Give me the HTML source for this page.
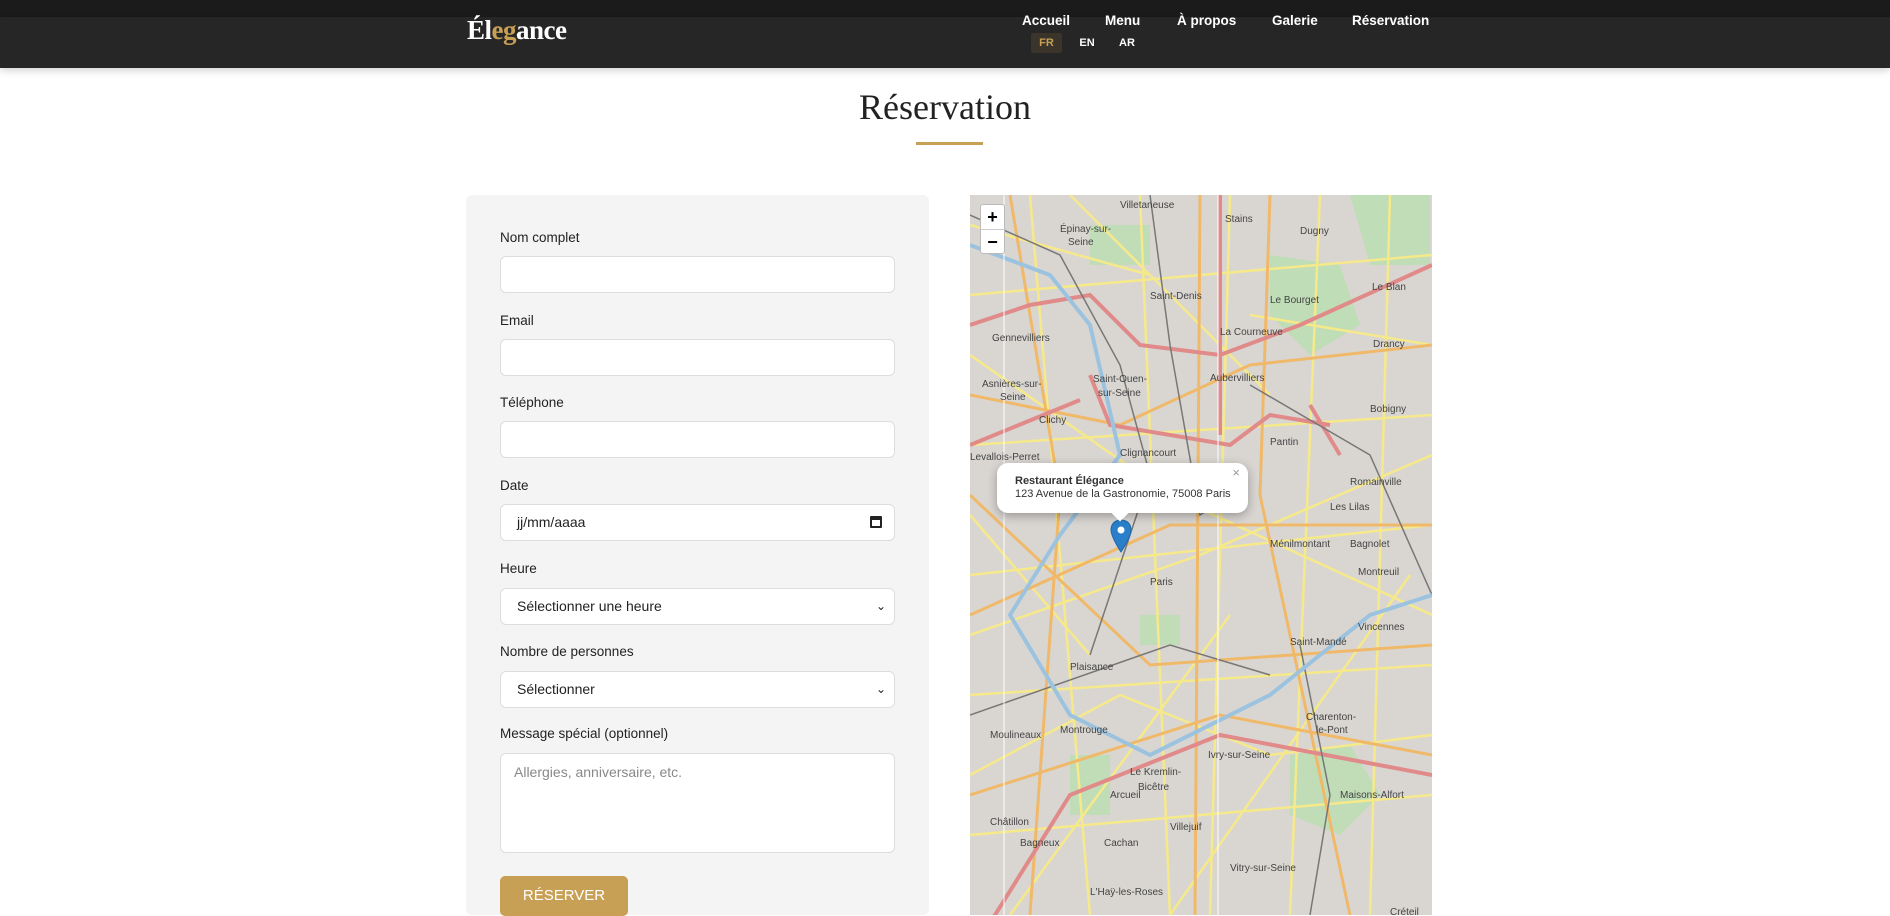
<!DOCTYPE html>
<html><head><meta charset="utf-8"><style>
*{box-sizing:border-box;margin:0;padding:0}
body{width:1890px;height:903px;overflow:hidden;background:#fff;font-family:"Liberation Sans",sans-serif;position:relative}
.top{position:absolute;left:0;top:0;width:1890px;height:17px;background:#1b1b1b}
.hdr{position:absolute;left:0;top:17px;width:1890px;height:51px;background:#262626;box-shadow:0 2px 8px rgba(0,0,0,.2)}
.logo{position:absolute;left:467px;top:15px;font-family:"Liberation Serif",serif;font-size:27px;color:#fff;letter-spacing:-.5px;font-weight:bold}
.logo b{color:#c8a055}
.nav a{position:absolute;top:13px;color:#fff;font-size:13.5px;font-weight:bold;text-decoration:none}
.lang{position:absolute;top:33px;height:20px;font-size:11px;font-weight:bold;color:#fff;line-height:20px;text-align:center}
h1{position:absolute;left:0;width:1890px;top:86px;text-align:center;font-family:"Liberation Serif",serif;font-weight:normal;font-size:36px;color:#222}
.line{position:absolute;left:916px;top:142px;width:67px;height:3px;background:#c8a055}
.panel{position:absolute;left:466px;top:195px;width:463px;height:720px;background:#f4f4f4;border-radius:6px}
.lbl{position:absolute;left:500px;font-size:13.5px;color:#222}
.in{position:absolute;left:500px;width:395px;height:37px;background:#fff;border:1px solid #ddd;border-radius:6px;font-size:14px;color:#222;padding-left:16px;line-height:35px}
.btn{position:absolute;left:500px;top:876px;width:128px;height:40px;background:#c8a055;border-radius:5px;color:#fff;font-size:15px;text-align:center;line-height:40px}
.map{position:absolute;left:970px;top:195px;width:462px;height:720px;background:#d9d6d2;overflow:hidden}
.zb{position:absolute;left:980px;top:204px;width:25px;height:50px;background:#fff;border:1px solid #bbb;border-radius:3px;font-size:18px;font-weight:bold;text-align:center;line-height:24px}
.pop{position:absolute;left:997px;top:463px;width:251px;height:50px;background:#fff;border-radius:11px;box-shadow:0 3px 10px rgba(0,0,0,.3);font-size:11px;color:#333;padding:12px 0 0 18px;line-height:13px}
</style></head><body>
<div class="top"></div>
<div class="hdr"></div>
<div class="logo">Él<b>eg</b>ance</div>
<div class="nav"><a style="left:1022px">Accueil</a><a style="left:1105px">Menu</a><a style="left:1177px">À propos</a><a style="left:1272px">Galerie</a><a style="left:1352px">Réservation</a></div>
<div class="lang" style="left:1031px;width:31px;background:#3a342b;color:#c8a055;border-radius:2px">FR</div>
<div class="lang" style="left:1078px;width:18px">EN</div>
<div class="lang" style="left:1118px;width:18px">AR</div>
<h1>Réservation</h1>
<div class="line"></div>
<div class="panel"></div>
<div class="lbl" style="top:230px">Nom complet</div><div class="in" style="top:256px"></div>
<div class="lbl" style="top:313px">Email</div><div class="in" style="top:339px"></div>
<div class="lbl" style="top:395px">Téléphone</div><div class="in" style="top:421px"></div>
<div class="lbl" style="top:478px">Date</div><div class="in" style="top:504px">jj/mm/aaaa<span style="position:absolute;right:12px;top:11px;width:12px;height:12px;border:2px solid #222;border-top-width:4px;border-radius:1px"></span></div>
<div class="lbl" style="top:561px">Heure</div><div class="in" style="top:588px">Sélectionner une heure<span style="position:absolute;right:8px;top:0;font-size:12px">&#8964;</span></div>
<div class="lbl" style="top:644px">Nombre de personnes</div><div class="in" style="top:671px">Sélectionner<span style="position:absolute;right:8px;top:0;font-size:12px">&#8964;</span></div>
<div class="lbl" style="top:726px">Message spécial (optionnel)</div><div class="in" style="top:753px;height:100px;color:#888;line-height:18px;padding-top:9px;padding-left:13px">Allergies, anniversaire, etc.</div>
<div class="btn">RÉSERVER</div>
<div class="map">
<svg width="462" height="720" viewBox="0 0 462 720" font-family="Liberation Sans" font-size="10" fill="#444">
<g fill="#b9dfb0" opacity=".8"><path d="M120 30h60v40h-60z"/><path d="M300 60l70 10 20 60-50 30-40-40z"/><path d="M320 560l60-10 30 50-40 40-50-20z"/><path d="M100 560h40v60h-40z"/><path d="M380 0h80v70h-60z"/><path d="M170 420h40v30h-40z"/></g>
<g fill="none" stroke="#f6e98a" stroke-width="2.5"><path d="M0 100L462 60M0 250L462 220M0 380L462 330M0 500L462 470M0 640L462 600M60 0L120 720M170 0L200 720M260 0L240 720M350 0L320 720M420 0L400 720M0 160L200 300L462 420M0 440L230 360L462 260M0 580L150 500L300 560L462 540M100 0L300 200M40 720L260 420M200 720L440 380M0 320L120 460M280 120L462 150M0 30L180 80"/></g>
<g fill="none" stroke="#f0b96a" stroke-width="3"><path d="M0 200L150 230L280 170L462 150M0 420L200 330L462 330M40 0L90 300L60 720M230 0L225 720M300 0L290 300L380 720M0 600L250 520L462 560M0 300L180 470L462 450"/></g>
<g fill="none" stroke="#e08a8a" stroke-width="4"><path d="M0 130L60 110L120 100L170 150L250 160L330 130L462 70M120 180L140 230L260 250L300 220L360 230M250 0L250 240M0 760L100 600L250 540L462 580M110 205L0 250M340 210L370 260"/></g>
<g fill="none" stroke="#777" stroke-width="1.5"><path d="M0 20L90 60L150 170L180 280L120 460M180 0L200 150L230 320L260 300M280 190L400 260L462 400M0 520L200 450L300 480M330 450L360 600L340 720"/></g>
<g fill="none" stroke="#9bc3e0" stroke-width="4"><path d="M0 50L80 80L120 130L150 260L90 340L40 420L100 520L180 560L300 500L400 420L462 400"/></g>
<path d="M34 0V720M248 0V720" stroke="#fff" stroke-width="1"/>
<g><text x="150" y="13">Villetaneuse</text><text x="255" y="27">Stains</text><text x="330" y="39">Dugny</text><text x="90" y="37">Épinay-sur-</text><text x="98" y="50">Seine</text><text x="180" y="104">Saint-Denis</text><text x="300" y="108">Le Bourget</text><text x="402" y="95">Le Blan</text><text x="22" y="146">Gennevilliers</text><text x="250" y="140">La Courneuve</text><text x="403" y="152">Drancy</text><text x="123" y="187">Saint-Ouen-</text><text x="128" y="201">sur-Seine</text><text x="240" y="186">Aubervilliers</text><text x="12" y="192">Asnières-sur-</text><text x="30" y="205">Seine</text><text x="400" y="217">Bobigny</text><text x="69" y="228">Clichy</text><text x="300" y="250">Pantin</text><text x="0" y="265">Levallois-Perret</text><text x="150" y="261">Clignancourt</text><text x="380" y="290">Romainville</text><text x="360" y="315">Les Lilas</text><text x="300" y="352">Ménilmontant</text><text x="380" y="352">Bagnolet</text><text x="180" y="390">Paris</text><text x="388" y="380">Montreuil</text><text x="388" y="435">Vincennes</text><text x="320" y="450">Saint-Mandé</text><text x="100" y="475">Plaisance</text><text x="20" y="543">Moulineaux</text><text x="90" y="538">Montrouge</text><text x="160" y="580">Le Kremlin-</text><text x="168" y="595">Bicêtre</text><text x="238" y="563">Ivry-sur-Seine</text><text x="336" y="525">Charenton-</text><text x="346" y="538">le-Pont</text><text x="140" y="603">Arcueil</text><text x="20" y="630">Châtillon</text><text x="370" y="603">Maisons-Alfort</text><text x="50" y="651">Bagneux</text><text x="134" y="651">Cachan</text><text x="200" y="635">Villejuif</text><text x="260" y="676">Vitry-sur-Seine</text><text x="120" y="700">L'Haÿ-les-Roses</text><text x="420" y="720">Créteil</text></g>
<path d="M151 325c-7 0-10 5-10 10 0 7 10 22 10 22s10-15 10-22c0-5-3-10-10-10z" fill="#2a7fcb" stroke="#1f66a8"/><circle cx="151" cy="335" r="3.5" fill="#fff"/>
</svg>
</div>
<div class="zb">+<div style="border-top:1px solid #ccc">−</div></div>
<div class="pop"><b>Restaurant Élégance</b><br>123 Avenue de la Gastronomie, 75008 Paris<span style="position:absolute;right:8px;top:3px;color:#999;font-size:13px">×</span><span style="position:absolute;left:117px;top:44px;width:12px;height:12px;background:#fff;transform:rotate(45deg)"></span></div>
</body></html>
